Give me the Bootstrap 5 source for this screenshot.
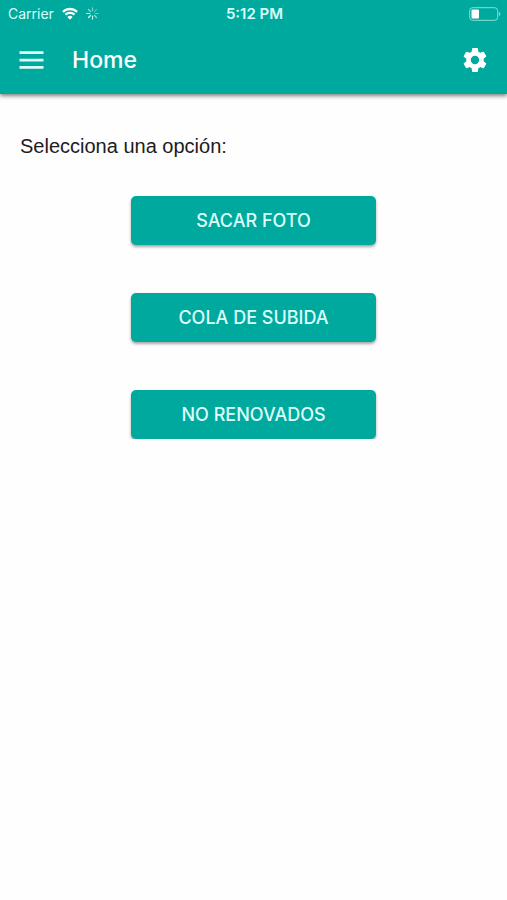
<!DOCTYPE html>
<html lang="es">
<head>
<meta charset="utf-8">
<meta name="viewport" content="width=device-width, initial-scale=1">
<title>Home</title>
<link href="https://cdn.jsdelivr.net/npm/bootstrap@5.3.0/dist/css/bootstrap.min.css" rel="stylesheet">
<style>
  :root { --teal: #00a99d; }
  body { font-family: "Liberation Sans", Arial, sans-serif; color: #1c1c1c; background: #fefefe; }
  .app-header { background: var(--teal); color: #fff; box-shadow: 0 2px 4px rgba(0,0,0,.5); }
  .status-bar { height: 27px; padding: 0 6px 0 8px; font: 400 14px/27px Inter, sans-serif; color: #d9fffb; }
  .status-bar .clock { font-size: 15px; font-weight: 600; }
  .toolbar { height: 67px; padding: 0 16px 2px; }
  .toolbar svg, .status-bar svg { display: block; }
  .icon-btn { color: #fff; line-height: 1; }
  .app-title { font: 500 23px/28px Inter, sans-serif; margin-left: 24px; }
  .prompt { font-size: 20px; line-height: 24px; }
  .choices { gap: 48px; margin-top: 38px; }
  .choice { width: 51.6%; height: 49px; border-radius: 5px; background: var(--teal); color: #dcfffb; font: 500 18px/24px Inter, sans-serif; box-shadow: 0 2px 3px rgba(0,0,0,.35); }
  .choice:hover, .choice:active { background: #009b90 !important; color: #fff !important; }
</style>
</head>
<body>
<header class="app-header">
  <div class="status-bar row g-0 align-items-center">
    <div class="col d-flex align-items-center">
      <span>Carrier</span>
      <svg class="ms-2" width="16" height="13" viewBox="0 0 16 13" fill="none" stroke="#fff" stroke-width="2.3" aria-label="Wi-Fi"><path d="M.9 4.8a10.4 10.4 0 0 1 14.2 0M3.5 7.7a6.6 6.6 0 0 1 9 0"/><path d="M8 12.8 5.4 10a3.8 3.8 0 0 1 5.2 0z" fill="#fff" stroke="none"/></svg>
      <svg class="ms-2" width="13" height="13" viewBox="0 0 13 13" stroke="#fff" stroke-width="1.2" stroke-linecap="round" aria-label="Actividad"><path d="M6.5.8v3" opacity=".5"/><path d="m10.5 2.5-2.1 2.1" opacity=".3"/><path d="M12.2 6.5h-3" opacity=".4"/><path d="m10.5 10.5-2.1-2.1" opacity=".6"/><path d="M6.5 12.2v-3" opacity=".8"/><path d="m2.5 10.5 2.1-2.1" opacity=".9"/><path d="M.8 6.5h3" opacity=".9"/><path d="m2.5 2.5 2.1 2.1" opacity=".6"/></svg>
    </div>
    <div class="col-auto clock">5:12 PM</div>
    <div class="col d-flex justify-content-end">
      <svg width="32" height="14" viewBox="0 0 32 14" aria-label="Batería"><rect x=".7" y=".7" width="28" height="12.6" rx="3" fill="none" stroke="#8fdcd6"/><rect x="2.5" y="2.5" width="7.5" height="9" rx="1" fill="#fff"/><path d="M30 5c1.8.6 1.8 3.4 0 4z" fill="#8fdcd6"/></svg>
    </div>
  </div>
  <nav class="toolbar d-flex align-items-center" aria-label="Principal">
    <button type="button" class="icon-btn btn p-0 border-0" aria-label="Menú">
      <svg width="32" height="32" viewBox="0 0 32 32" fill="#d9fffb"><path d="M3.5 7.3h24v2.700h-24zM3.5 14.700h24v2.700h-24zM3.5 22h24v2.700h-24z"/></svg>
    </button>
    <h1 class="app-title mb-0">Home</h1>
    <button type="button" class="icon-btn btn p-0 border-0 ms-auto" aria-label="Ajustes">
      <svg width="32" height="32" viewBox="0 0 512 512" fill="#fff"><path d="M416.3 256c0-8.3-.7-16.1-1.7-23.900l49.100-39.400c4.500-3.600 5.700-10.200 2.800-15.500l-46.500-82.300c-2.900-5.300-9.100-7.100-14.300-5.300l-57.900 23.900c-12.100-9.500-25.200-17.400-39.300-23.500L299.600 26.900C298.600 21.600 294.100 17 288.500 17h-93c-5.600 0-10.300 4.600-11.200 9.900L175.500 90c-14.200 6-27.200 14-39.300 23.500L78.300 89.600c-5.200-1.900-11.400 0-14.300 5.300l-46.500 82.300c-2.800 5.200-1.600 11.800 2.800 15.500l49.100 39.400a190 190 0 0 0 0 47.800l-49.100 39.400c-4.500 3.600-5.700 10.200-2.800 15.500l46.500 82.300c2.900 5.300 9.100 7.100 14.300 5.300l57.900-23.900c12.100 9.500 25.200 17.400 39.300 23.500l8.800 63.100c.9 5.300 5.600 9.900 11.200 9.900h93c5.600 0 10.100-4.600 11.100-9.900l8.900-63.100c14.200-6 27.200-14 39.300-23.500l57.900 23.900c5.200 1.900 11.400 0 14.300-5.300l46.500-82.300c2.800-5.300 1.600-11.900-2.800-15.500l-49.100-39.400c1-7.800 1.700-15.600 1.700-23.900zM242 340a84 84 0 1 1 0-168 84 84 0 0 1 0 168z" transform="translate(62 51) scale(.8)"/></svg>
    </button>
  </nav>
</header>
<main class="px-3 pt-4">
  <div class="px-1 pt-3">
    <p class="prompt mb-0">Selecciona una opción:</p>
  </div>
  <div class="choices d-flex flex-column align-items-center">
    <button type="button" class="choice btn border-0">SACAR FOTO</button>
    <button type="button" class="choice btn border-0">COLA DE SUBIDA</button>
    <button type="button" class="choice btn border-0">NO RENOVADOS</button>
  </div>
</main>
<script src="https://cdn.jsdelivr.net/npm/bootstrap@5.3.0/dist/js/bootstrap.bundle.min.js"></script>
</body>
</html>
